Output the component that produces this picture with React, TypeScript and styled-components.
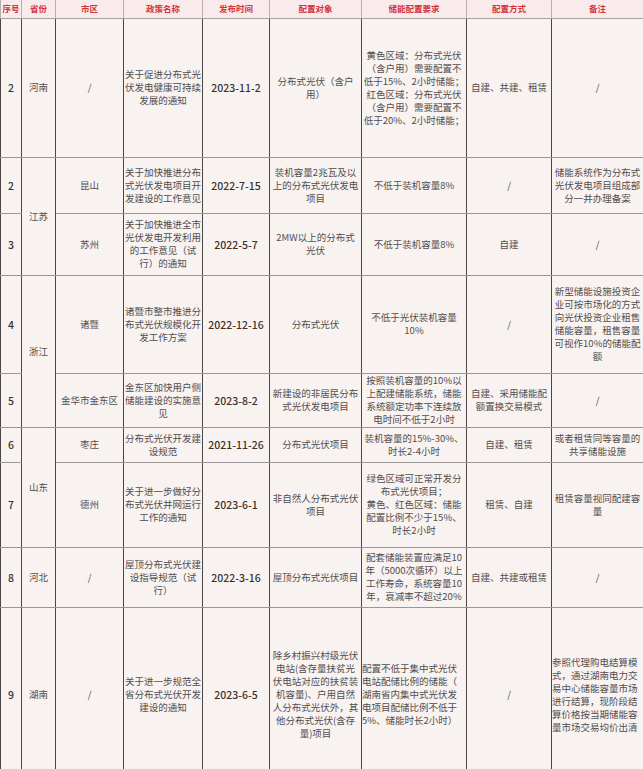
import React from "react";
import styled, { createGlobalStyle } from "styled-components";

const GlobalStyle = createGlobalStyle`
  html, body { margin: 0; padding: 0; background: #f8f2f0; }
  body { font-family: "Noto Sans CJK SC", "Noto Sans", sans-serif; }
`;

const Sheet = styled.table`
  width: 643px;
  table-layout: fixed;
  border-collapse: collapse;
  background: #f8f2f0;
  color: #4a4646;
  font-size: 9.5px;
  line-height: 13px;
`;

const HeadRow = styled.tr`
  height: 18px;
  background: #f9ebeb;
`;

const HeadCell = styled.th`
  color: #d2343c;
  font-size: 8.5px;
  font-weight: 600;
  padding: 0;
  border-left: 1px solid #b9b1b1;
  border-right: 1px solid #b9b1b1;
  border-bottom: 1px solid #a9a1a1;
  white-space: nowrap;
  overflow: hidden;
`;

const Row = styled.tr<{ $h: number }>`
  height: ${(p) => p.$h}px;
`;

const Cell = styled.td<{ $align?: "left" | "center"; $strong?: boolean }>`
  padding: 0;
  text-align: ${(p) => p.$align ?? "center"};
  vertical-align: middle;
  white-space: nowrap;
  overflow: hidden;
  border-left: 1.5px solid #4a4646;
  border-right: 1.5px solid #4a4646;
  border-top: 1px solid #9c9696;
  border-bottom: 1px solid #9c9696;
  color: ${(p) => (p.$strong ? "#363232" : "#524e4e")};
  font-weight: ${(p) => (p.$strong ? 500 : 400)};
  font-size: ${(p) => (p.$strong ? "10.5px" : "9.5px")};
`;

const widths = [21, 34, 68, 79, 67, 92, 105, 85, 92];
const heads = ["序号", "省份", "市区", "政策名称", "发布时间", "配置对象", "储能配置要求", "配置方式", "备注"];

// "|" separates lines; a single "/" cell is just a slash
const T: React.FC<{ t: string }> = ({ t }) =>
  t === "/" ? <>/</> : (
    <>
      {t.split("|").map((l, i, arr) => (
        <React.Fragment key={i}>
          {l}
          {i < arr.length - 1 && <br />}
        </React.Fragment>
      ))}
    </>
  );

type RowData = {
  h: number;
  no: string;
  prov?: { name: string; span: number };
  city: string;
  policy: string;
  date: string;
  target: string;
  req: string;
  reqLeft?: boolean;
  mode: string;
  note: string;
  noteLeft?: boolean;
};

const rows: RowData[] = [
  {
    h: 139, no: "2", prov: { name: "河南", span: 1 }, city: "/",
    policy: "关于促进分布式光|伏发电健康可持续|发展的通知", date: "2023-11-2",
    target: "分布式光伏（含户|用）",
    req: "黄色区域：分布式光伏|（含户用）需要配置不|低于15%、2小时储能；|红色区域：分布式光伏|（含户用）需要配置不|低于20%、2小时储能；",
    mode: "自建、共建、租赁", note: "/",
  },
  {
    h: 56, no: "2", prov: { name: "江苏", span: 2 }, city: "昆山",
    policy: "关于加快推进分布|式光伏发电项目开|发建设的工作意见", date: "2022-7-15",
    target: "装机容量2兆瓦及以|上的分布式光伏发电|项目",
    req: "不低于装机容量8%", mode: "/",
    note: "储能系统作为分布式|光伏发电项目组成部|分一并办理备案",
  },
  {
    h: 62, no: "3", city: "苏州",
    policy: "关于加快推进全市|光伏发电开发利用|的工作意见（试|行）的通知", date: "2022-5-7",
    target: "2MW以上的分布式|光伏", req: "不低于装机容量8%", mode: "自建", note: "/",
  },
  {
    h: 98, no: "4", prov: { name: "浙江", span: 2 }, city: "诸暨",
    policy: "诸暨市整市推进分|布式光伏规模化开|发工作方案", date: "2022-12-16",
    target: "分布式光伏", req: "不低于光伏装机容量|10%", mode: "/",
    note: "新型储能设施投资企|业可按市场化的方式|向光伏投资企业租售|储能容量，租售容量|可视作10%的储能配|额",
  },
  {
    h: 54, no: "5", city: "金华市金东区",
    policy: "金东区加快用户侧|储能建设的实施意|见", date: "2023-8-2",
    target: "新建设的非居民分布|式光伏发电项目",
    req: "按照装机容量的10%以|上配建储能系统，储能|系统额定功率下连续放|电时间不低于2小时",
    mode: "自建、采用储能配|额置换交易模式", note: "/",
  },
  {
    h: 35, no: "6", prov: { name: "山东", span: 2 }, city: "枣庄",
    policy: "分布式光伏开发建|设规范", date: "2021-11-26",
    target: "分布式光伏项目", req: "装机容量的15%-30%、|时长2-4小时",
    mode: "自建、租赁", note: "或者租赁同等容量的|共享储能设施",
  },
  {
    h: 85, no: "7", city: "德州",
    policy: "关于进一步做好分|布式光伏并网运行|工作的通知", date: "2023-6-1",
    target: "非自然人分布式光伏|项目",
    req: "绿色区域可正常开发分|布式光伏项目；|黄色、红色区域：储能|配置比例不少于15%、|时长2小时",
    mode: "租赁、自建", note: "租赁容量视同配建容|量",
  },
  {
    h: 60, no: "8", prov: { name: "河北", span: 1 }, city: "/",
    policy: "屋顶分布式光伏建|设指导规范（试|行）", date: "2022-3-16",
    target: "屋顶分布式光伏项目",
    req: "配套储能装置应满足10|年（5000次循环）以上|工作寿命，系统容量10|年，衰减率不超过20%",
    mode: "自建、共建或租赁", note: "/",
  },
  {
    h: 175, no: "9", prov: { name: "湖南", span: 1 }, city: "/",
    policy: "关于进一步规范全|省分布式光伏开发|建设的通知", date: "2023-6-5",
    target: "除乡村振兴村级光伏|电站(含存量扶贫光|伏电站对应的扶贫装|机容量)、户用自然|人分布式光伏外，其|他分布式光伏(含存|量)项目",
    req: "配置不低于集中式光伏|电站配储比例的储能（|湖南省内集中式光伏发|电项目配储比例不低于|5%、储能时长2小时）",
    reqLeft: true,
    mode: "/",
    note: "参照代理购电结算模|式，通过湖南电力交|易中心储能容量市场|进行结算，现阶段结|算价格按当期储能容|量市场交易均价出清",
    noteLeft: true,
  },
];

export default function App() {
  return (
    <>
      <GlobalStyle />
      <Sheet>
        <colgroup>
          {widths.map((w, i) => (
            <col key={i} style={{ width: w }} />
          ))}
        </colgroup>
        <thead>
          <HeadRow>
            {heads.map((h) => (
              <HeadCell key={h}>{h}</HeadCell>
            ))}
          </HeadRow>
        </thead>
        <tbody>
          {rows.map((r, i) => (
            <Row key={i} $h={r.h}>
              <Cell $strong>{r.no}</Cell>
              {r.prov && <Cell rowSpan={r.prov.span}>{r.prov.name}</Cell>}
              <Cell>
                <T t={r.city} />
              </Cell>
              <Cell>
                <T t={r.policy} />
              </Cell>
              <Cell $strong>{r.date}</Cell>
              <Cell>
                <T t={r.target} />
              </Cell>
              <Cell $align={r.reqLeft ? "left" : "center"}>
                <T t={r.req} />
              </Cell>
              <Cell>
                <T t={r.mode} />
              </Cell>
              <Cell $align={r.noteLeft ? "left" : "center"}>
                <T t={r.note} />
              </Cell>
            </Row>
          ))}
        </tbody>
      </Sheet>
    </>
  );
}
